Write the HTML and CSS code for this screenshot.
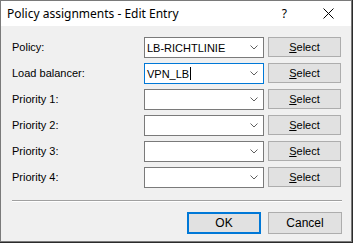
FILE: index.html
```html
<!DOCTYPE html>
<html lang="en">
<head>
    <meta charset="UTF-8">
    <title>Policy assignments - Edit Entry</title>
    <link rel="stylesheet" href="styles.css">
</head>
<body>
    <div class="window">
        <div class="titlebar">
            <span class="title">Policy assignments - Edit Entry</span>
            <span class="help">?</span>
            <svg class="close" width="11" height="11" viewBox="0 0 11 11">
                <path d="M0.5 0.5 L10.5 10.5 M10.5 0.5 L0.5 10.5" stroke="#000" stroke-width="1"/>
            </svg>
        </div>

        <div class="content">
            <div class="form">
                <label>Policy:</label>
                <div class="combo"><span class="value">LB-RICHTLINIE</span><svg class="arrow" width="8" height="5" viewBox="0 0 8 5"><path d="M0.5 0.5 L4 4 L7.5 0.5" fill="none" stroke="#606060"/></svg></div>
                <button class="btn"><u>S</u>elect</button>

                <label>Load balancer:</label>
                <div class="combo focused"><span class="value">VPN_LB</span><span class="caret"></span><svg class="arrow" width="8" height="5" viewBox="0 0 8 5"><path d="M0.5 0.5 L4 4 L7.5 0.5" fill="none" stroke="#606060"/></svg></div>
                <button class="btn"><u>S</u>elect</button>

                <label>Priority 1:</label>
                <div class="combo"><span class="value"></span><svg class="arrow" width="8" height="5" viewBox="0 0 8 5"><path d="M0.5 0.5 L4 4 L7.5 0.5" fill="none" stroke="#606060"/></svg></div>
                <button class="btn"><u>S</u>elect</button>

                <label>Priority 2:</label>
                <div class="combo"><span class="value"></span><svg class="arrow" width="8" height="5" viewBox="0 0 8 5"><path d="M0.5 0.5 L4 4 L7.5 0.5" fill="none" stroke="#606060"/></svg></div>
                <button class="btn"><u>S</u>elect</button>

                <label>Priority 3:</label>
                <div class="combo"><span class="value"></span><svg class="arrow" width="8" height="5" viewBox="0 0 8 5"><path d="M0.5 0.5 L4 4 L7.5 0.5" fill="none" stroke="#606060"/></svg></div>
                <button class="btn"><u>S</u>elect</button>

                <label>Priority 4:</label>
                <div class="combo"><span class="value"></span><svg class="arrow" width="8" height="5" viewBox="0 0 8 5"><path d="M0.5 0.5 L4 4 L7.5 0.5" fill="none" stroke="#606060"/></svg></div>
                <button class="btn"><u>S</u>elect</button>
            </div>

            <div class="separator"></div>

            <div class="actions">
                <button class="btn default">OK</button>
                <button class="btn">Cancel</button>
            </div>
        </div>
    </div>
</body>
</html>
```

FILE: styles.css
```css
body {
    margin: 0;
    padding: 0;
    background: #2b2b2b;
    font-family: 'Liberation Sans', Arial, sans-serif;
    font-size: 11px;
    color: #000;
}

.window {
    width: 350px;
    height: 240px;
    border: 1px solid #7a7a7a;
    background: #f0f0f0;
}

.titlebar {
    height: 25px;
    background: #fff;
    display: flex;
    align-items: center;
    padding-left: 6px;
}

.title {
    font-family: 'Noto Sans', 'Open Sans', sans-serif;
    font-size: 12px;
    flex: 1;
    padding-bottom: 1px;
}

.help {
    font-family: 'Noto Sans', sans-serif;
    font-size: 12px;
    margin-right: 36px;
}

.close {
    margin-right: 17px;
}

.content {
    padding: 11px 9px 0 11px;
}

.form {
    display: grid;
    grid-template-columns: 128px 120px 73px;
    column-gap: 4px;
    row-gap: 5px;
    align-items: center;
}

.form label {
    padding-bottom: 1px;
}

.combo {
    height: 19px;
    background: #fff;
    border: 1px solid #7a7a7a;
    display: flex;
    align-items: center;
    padding-left: 2px;
    padding-right: 5px;
}

.combo.focused {
    border-color: #0078d7;
}

.combo .value {
    font-size: 11px;
}

.caret {
    width: 1px;
    height: 13px;
    background: #000;
    margin-left: 1px;
}

.arrow {
    margin-left: auto;
}

.btn {
    height: 20px;
    background: #e1e1e1;
    border: 1px solid #adadad;
    font-family: 'Liberation Sans', Arial, sans-serif;
    font-size: 11px;
    color: #000;
    padding: 0;
    margin: 0;
}

.form .btn {
    margin-top: -1px;
}

.separator {
    height: 1px;
    background: #a0a0a0;
    border-bottom: 1px solid #fff;
    margin: 12px 0 0 0;
}

.actions {
    display: flex;
    justify-content: flex-end;
    gap: 7px;
    margin-top: 10px;
}

.actions .btn {
    width: 74px;
    height: 22px;
    font-size: 12px;
}

.actions .default {
    border: 2px solid #0078d7;
}
```
